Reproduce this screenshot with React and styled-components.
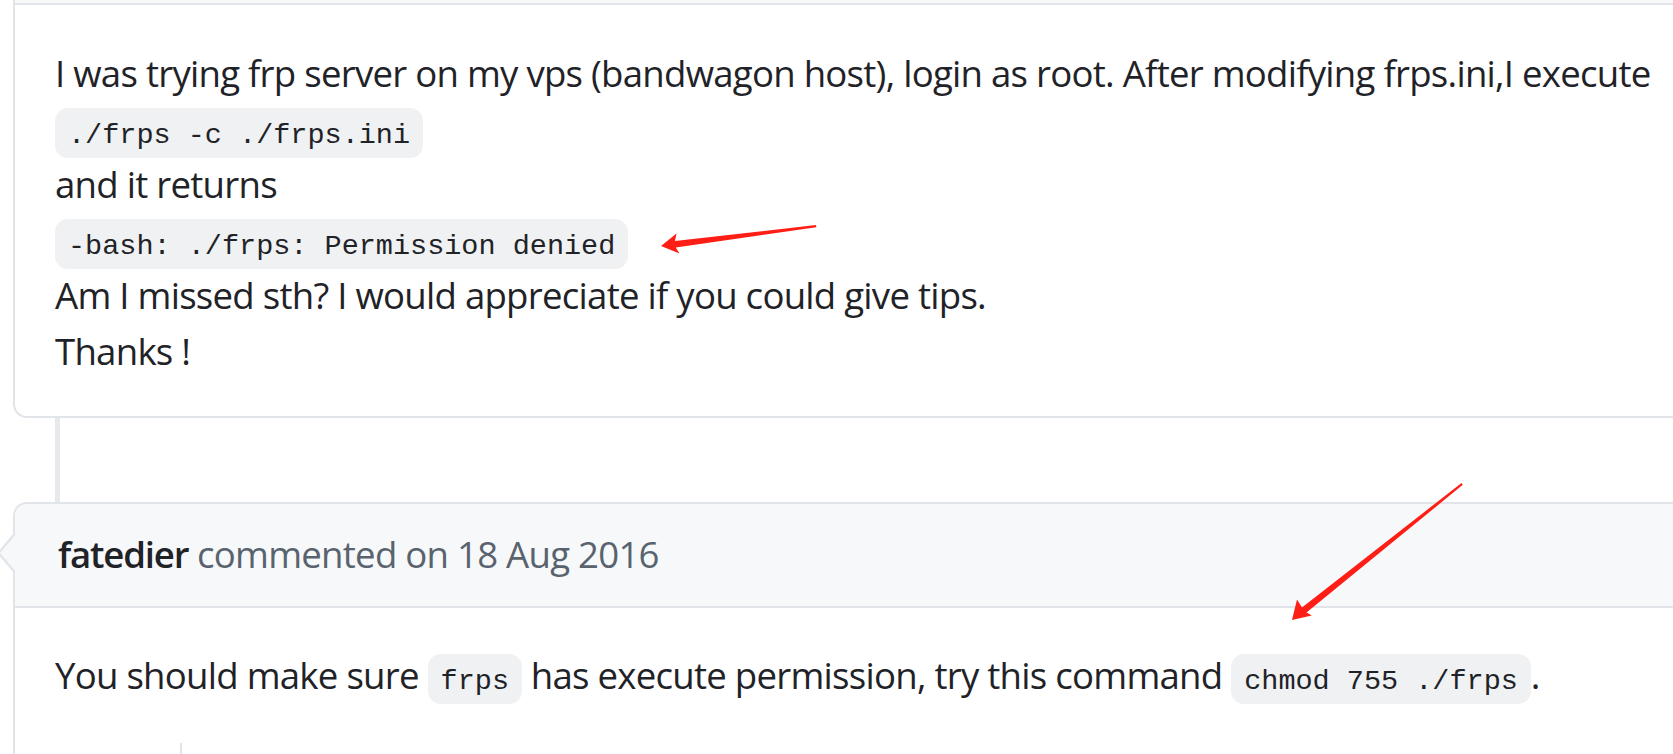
import React from "react";
import styled, { createGlobalStyle } from "styled-components";

const Global = createGlobalStyle`
  html, body { margin: 0; padding: 0; background: #ffffff; overflow: hidden; }
  body { width: 1673px; height: 754px; }
`;

const BORDER = "#e1e4e8";
const TEXT = "#1f2328";

const Page = styled.div`
  position: relative;
  width: 1673px;
  height: 754px;
  overflow: hidden;
  padding-left: 13px;
  box-sizing: border-box;
  font-family: "Open Sans", "Noto Sans", sans-serif;
  letter-spacing: -0.74px;
  color: ${TEXT};
`;

const Card = styled.div`
  position: relative;
  width: 1760px;
  border-left: 2px solid ${BORDER};
  border-top: ${(p) => (p.$open ? "none" : `2px solid ${BORDER}`)};
  border-bottom: 2px solid ${BORDER};
  border-radius: ${(p) => (p.$open ? "0 0 0 14px" : "14px 0 0 0")};
  background: #ffffff;
`;

const HeaderStub = styled.div`
  height: 3px;
  background: #f6f8fa;
  border-bottom: 2px solid ${BORDER};
`;

const Header = styled.div`
  position: relative;
  background: #f6f8fa;
  border-bottom: 2px solid ${BORDER};
  border-top-left-radius: 12px;
  padding: 23px 40px 23px 43px;
  font-size: 36.6px;
  line-height: 55.5px;
  color: #59636e;
  white-space: nowrap;

  &::before,
  &::after {
    content: "";
    position: absolute;
    top: 30px;
    width: 0;
    height: 0;
    border-style: solid;
    border-color: transparent;
    border-width: 19px 16px 19px 0;
  }
  &::before {
    left: -18px;
    border-right-color: ${BORDER};
  }
  &::after {
    left: -15px;
    border-right-color: #f6f8fa;
  }
`;

const Author = styled.strong`
  color: ${TEXT};
  font-weight: 600;
  letter-spacing: -1.2px;
`;

const Body = styled.div`
  padding: ${(p) => p.$pad};
  font-size: 36.6px;
  line-height: 55.5px;
  white-space: nowrap;
`;

const Para = styled.p`
  margin: 0;
`;

const Code = styled.code`
  font-family: "Liberation Mono", "DejaVu Sans Mono", monospace;
  font-size: 28.5px;
  line-height: 1;
  letter-spacing: 0;
  background: rgba(175, 184, 193, 0.2);
  border-radius: 13px;
  padding: 11px 13px 6px;
  color: ${TEXT};
`;

const TimelineGap = styled.div`
  height: 84px;
  margin-left: 42px;
  border-left: 5px solid #e6e8eb;
`;

const Footer = styled.div`
  display: flex;
  height: 12px;
`;

const FooterCell = styled.div`
  width: 165px;
  border-right: 2px solid ${BORDER};
`;

const Arrows = styled.svg`
  position: absolute;
  left: 0;
  top: 0;
  pointer-events: none;
`;

export default function App() {
  return (
    <>
      <Global />
      <Page>
        <Card $open>
          <HeaderStub />
          <Body $pad="41px 40px 37px 40px">
            <Para>
              I was trying frp server on my vps (bandwagon host), login as root. After modifying frps.ini,I execute
              <br />
              <Code>./frps -c ./frps.ini</Code>
              <br />
              and it returns
              <br />
              <Code>-bash: ./frps: Permission denied</Code>
              <br />
              Am I missed sth? I would appreciate if you could give tips.
              <br />
              Thanks !
            </Para>
          </Body>
        </Card>
        <TimelineGap />
        <Card>
          <Header>
            <Author>fatedier</Author> commented on 18 Aug 2016
          </Header>
          <Body $pad="40px 40px 40px 40px">
            <Para>
              You should make sure <Code>frps</Code> has execute permission, try this command{" "}
              <Code>chmod 755 ./frps</Code>.
            </Para>
          </Body>
          <Footer>
            <FooterCell />
          </Footer>
        </Card>
        <Arrows width="1673" height="754" viewBox="0 0 1673 754">
          <polygon
            fill="#fe1e16"
            points="816,225 675,241 676.5,233.5 661,246 679.5,253.5 675.8,247.4 816.3,227.2"
          />
          <polygon
            fill="#fe1e16"
            points="1461.5,483 1302,607.5 1297,599.5 1292,620 1311.8,615.5 1306.5,612.6 1462.8,484.8"
          />
        </Arrows>
      </Page>
    </>
  );
}
